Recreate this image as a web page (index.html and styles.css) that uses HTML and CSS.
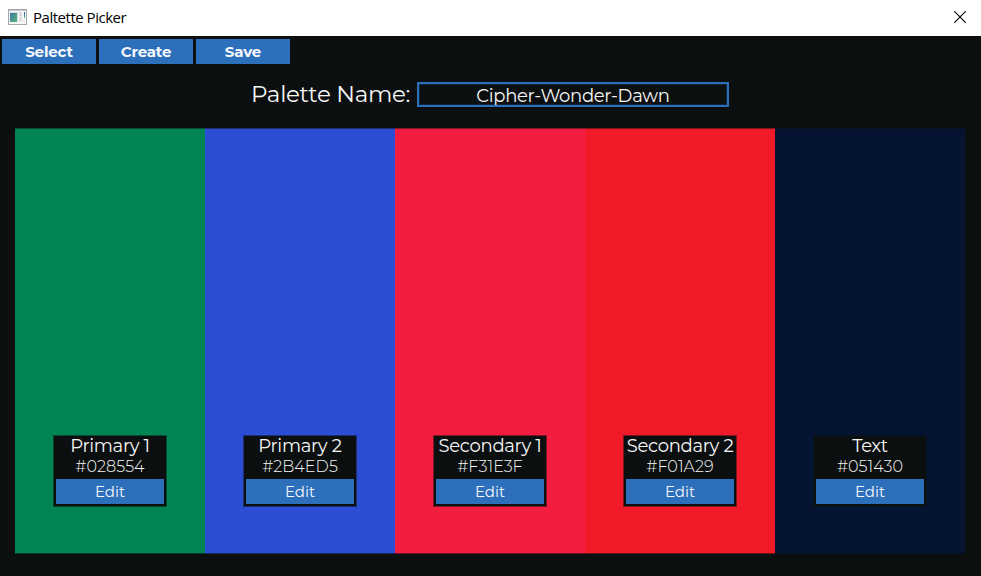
FILE: index.html
```html
<!DOCTYPE html>
<html lang="en">
<head>
<meta charset="utf-8">
<title>Paltette Picker</title>
<link rel="stylesheet" href="styles.css">
</head>
<body>
<header class="titlebar">
  <svg class="app-icon" width="20" height="16" viewBox="0 0 20 16">
    <defs>
      <linearGradient id="pane" x1="0" y1="0" x2="1" y2="1"><stop offset="0" stop-color="#3f76a8"/><stop offset="1" stop-color="#58b878"/></linearGradient>
      <linearGradient id="bar" x1="0" y1="0" x2="0" y2="1"><stop offset="0" stop-color="#3c62b8"/><stop offset="1" stop-color="#55b080"/></linearGradient>
    </defs>
    <rect x=".5" y=".5" width="18" height="15" fill="#f6f6f6" stroke="#a3a6ab"/>
    <path d="M1 1.5h17" stroke="#c5c8cc"/>
    <rect x="2" y="3" width="8" height="10" fill="#d5dde2"/>
    <rect x="2" y="4" width="7" height="9" fill="url(#pane)"/>
    <path d="M11 4h3M11 6.500h3M11 9h3M11 11.500h3" stroke="#d0d0d0" stroke-width="1.500"/>
    <rect x="16" y="3" width="1" height="6" fill="url(#bar)"/>
    <path d="M15 11.500h2" stroke="#ddd"/>
  </svg>
  <span class="title">Paltette Picker</span>
  <svg class="close" width="12" height="12" viewBox="0 0 12 12"><path d="M.3.3l11.400 11.400M11.700.3L.3 11.700" stroke="#000" stroke-width="1.100"/></svg>
</header>
<nav class="toolbar">
  <button class="tool">Select</button>
  <button class="tool">Create</button>
  <button class="tool">Save</button>
</nav>
<div class="name-row">
  <label class="name-label" for="name">Palette Name:</label>
  <input class="name-input" id="name" value="Cipher-Wonder-Dawn">
</div>
<main class="palette">
  <section class="swatch green"><div class="card"><div class="role">Primary 1</div><div class="hex">#028554</div><button class="edit">Edit</button></div></section>
  <section class="swatch blue"><div class="card"><div class="role">Primary 2</div><div class="hex">#2B4ED5</div><button class="edit">Edit</button></div></section>
  <section class="swatch rose"><div class="card"><div class="role">Secondary 1</div><div class="hex">#F31E3F</div><button class="edit">Edit</button></div></section>
  <section class="swatch red"><div class="card"><div class="role">Secondary 2</div><div class="hex">#F01A29</div><button class="edit">Edit</button></div></section>
  <section class="swatch navy"><div class="card"><div class="role">Text</div><div class="hex">#051430</div><button class="edit">Edit</button></div></section>
</main>
</body>
</html>
```

FILE: styles.css
```css
* { box-sizing: border-box; }
body {
  margin: 0;
  height: 576px;
  overflow: hidden;
  background: #0b0f10;
  color: #f6f6f6;
  font-family: Montserrat, Inter, sans-serif;
}
button, input { font-family: inherit; padding: 0; margin: 0; border-radius: 0; outline: 0; }
button { border: 0; background: #2c6fbb; color: #f6f8fc; }

.titlebar { height: 36px; background: #fff; color: #000; display: flex; align-items: center; padding: 0 15px 0 8px; }
.app-icon { display: block; margin-top: -2px; }
.title { font: 15px/20px "Open Sans", sans-serif; letter-spacing: -0.48px; margin: -2px 0 0 5px; }
.close { margin-left: auto; margin-top: -3px; }

.toolbar { display: flex; gap: 3px; padding: 3px 2px 0; }
.tool { width: 94px; height: 25px; font-size: 15px; font-weight: 700; line-height: 25px; letter-spacing: -0.15px; }

.name-row { display: flex; height: 25px; margin: 18px 0 0 251px; }
.name-label { width: 166px; font-size: 23px; line-height: 24px; letter-spacing: -0.3px; white-space: nowrap; }
.name-input {
  width: 312px;
  height: 25px;
  border: 2px solid #2c6fbb;
  background: #0b0f10;
  color: #f6f6f6;
  font-size: 18px;
  font-weight: 450;
  letter-spacing: -0.32px;
  text-align: center;
  padding-top: 2px;
  box-shadow: inset 0 0 0 1px #10253a;
}

.palette { display: flex; width: 950px; height: 426px; margin: 21px 15px 0; }
.swatch {
  width: 190px;
  padding: 308px 0 0 39px;
  box-shadow: inset 0 1px rgba(11, 15, 16, .5), inset 0 -1px rgba(11, 15, 16, .6);
}
.green { background: #028554; }
.blue { background: #2b4ed5; }
.rose { background: #f31e3f; }
.red { background: #f01a29; }
.navy { background: #051430; }

.card {
  width: 112px;
  height: 70px;
  padding: 0 2px;
  background: #0b0f10;
  box-shadow: 0 0 0 1px rgba(11, 15, 16, .5);
  text-align: center;
  white-space: nowrap;
}
.role { height: 21px; font-size: 18px; font-weight: 450; line-height: 20px; letter-spacing: -0.3px; }
.hex { height: 22px; font-size: 16px; font-weight: 350; line-height: 20px; letter-spacing: 0.05px; }
.edit { display: block; width: 108px; height: 25px; font-size: 15px; line-height: 25px; }
```
